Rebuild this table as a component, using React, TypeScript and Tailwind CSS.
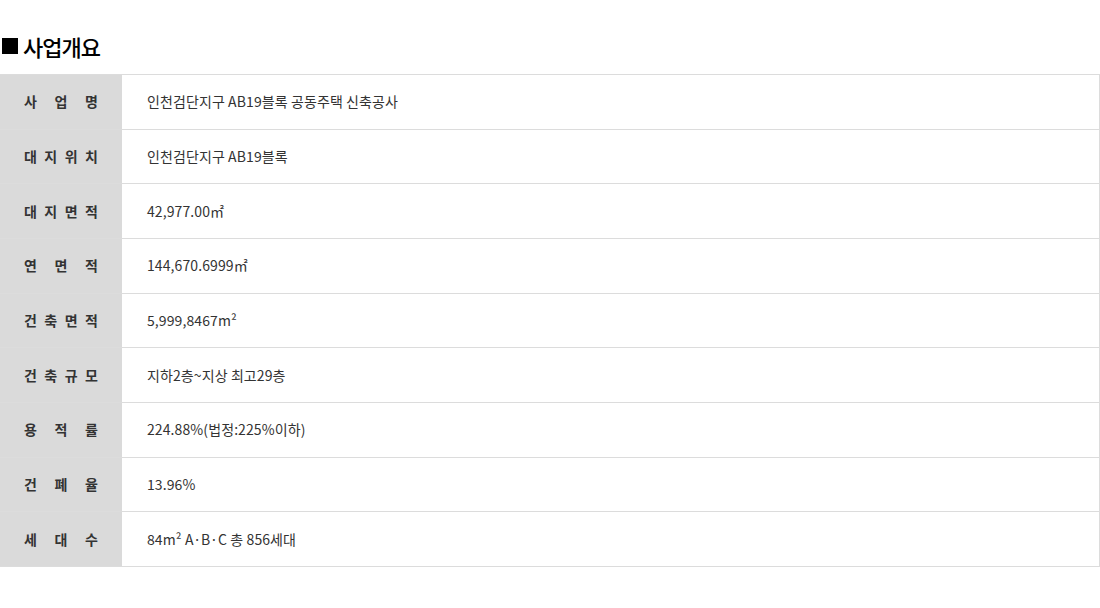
const rows: { label: string; value: string }[] = [
  { label: "사업명", value: "인천검단지구 AB19블록 공동주택 신축공사" },
  { label: "대지위치", value: "인천검단지구 AB19블록" },
  { label: "대지면적", value: "42,977.00㎡" },
  { label: "연면적", value: "144,670.6999㎡" },
  { label: "건축면적", value: "5,999,8467m²" },
  { label: "건축규모", value: "지하2층~지상 최고29층" },
  { label: "용적률", value: "224.88%(법정:225%이하)" },
  { label: "건폐율", value: "13.96%" },
  { label: "세대수", value: "84m² A·B·C 총 856세대" },
];

export default function App() {
  return (
    <div className="w-[1100px] h-[608px] bg-white text-[#333] font-['Noto_Sans_CJK_KR','Noto_Sans',sans-serif]">
      {/* Title */}
      <div className="flex items-center h-[36px] mt-[28px] mb-[10px]">
        <span className="w-4 h-4 bg-black ml-[2px] mr-[5px]" />
        <h2 className="text-[22px] font-medium text-black tracking-[-1px]">사업개요</h2>
      </div>

      {/* Table */}
      <div className="w-[1100px] border-t border-r border-[#dcdcdc]">
        {rows.map((row) => (
          <div key={row.label} className="flex h-[54.67px] border-b border-[#dcdcdc]">
            <div className="w-[122px] shrink-0 bg-[#dadada] flex items-center justify-between px-[24px] text-[14px] font-bold text-[#333]">
              {row.label.split("").map((ch, i) => (
                <span key={i}>{ch}</span>
              ))}
            </div>
            <div className="flex items-center pl-[25px] text-[14px] text-[#333] tracking-[0.1px]">
              {row.value}
            </div>
          </div>
        ))}
      </div>
    </div>
  );
}
